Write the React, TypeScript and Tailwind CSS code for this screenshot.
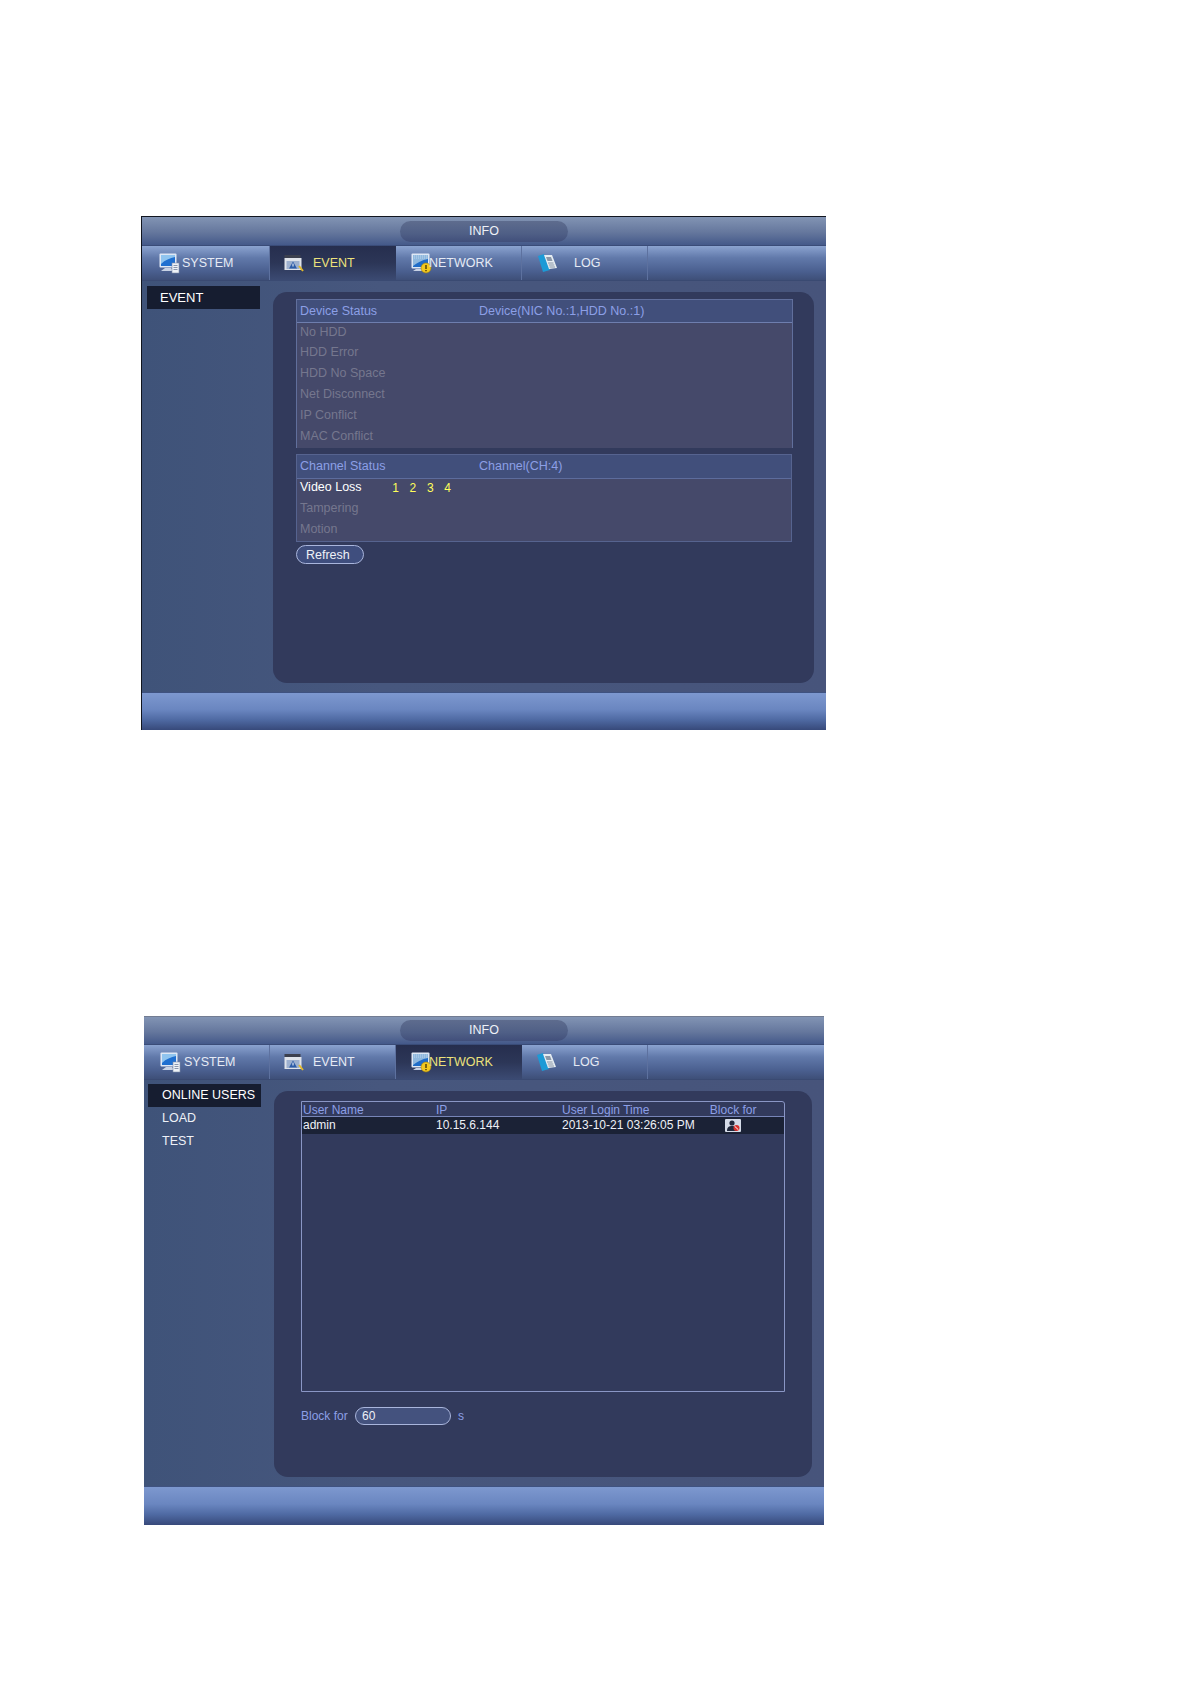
import React from "react";

const SystemIcon = () => (
  <svg width="21" height="21" viewBox="0 0 21 21" className="shrink-0">
    <rect x="0.5" y="0.5" width="17" height="14" rx="1" fill="#dfe8f5" />
    <path d="M2 2h14v11H2z" fill="#1f6fd0" />
    <path d="M2 2h14v2C11 5 6 7 2 11z" fill="#8fc4ef" />
    <path d="M6 15h6l3 3H2z" fill="#c8d2e4" />
    <rect x="13" y="10" width="7" height="10" fill="#eef2f7" stroke="#7f8ca8" strokeWidth="0.6" />
    <path d="M14.5 12.5h4M14.5 14.5h4M14.5 16.5h4" stroke="#6f7d99" strokeWidth="0.8" />
  </svg>
);

const EventIcon = () => (
  <svg width="20" height="18" viewBox="0 0 20 18" className="shrink-0">
    <rect x="0.5" y="1" width="16" height="3" fill="#3c404e" />
    <rect x="0.5" y="4" width="17" height="12" fill="#dfe3ea" />
    <rect x="2.5" y="7" width="13" height="8" fill="#9db0cf" />
    <path d="M9 7.5l4 7H5z" fill="#2d5ca8" />
    <path d="M9 9.5v3" stroke="#ffffff" strokeWidth="1" />
    <path d="M15 12l4 5" stroke="#e2b92a" strokeWidth="2" />
  </svg>
);

const NetworkIcon = () => (
  <svg width="21" height="21" viewBox="0 0 21 21" className="shrink-0">
    <rect x="0.5" y="0.5" width="18" height="15" rx="1" fill="#dfe8f5" />
    <path d="M2 2h15v12H2z" fill="#1f6cc8" />
    <path d="M2 2h15v4C11 7 6 10 2 13z" fill="#8fb8de" />
    <path d="M3 3h13M3 5h13" stroke="#dbe9f6" strokeWidth="0.6" strokeDasharray="1 1" />
    <path d="M5 16h7l2 2H2z" fill="#c8d2e4" />
    <circle cx="15" cy="15" r="5" fill="#f2c81e" stroke="#9d7f10" strokeWidth="0.6" />
    <path d="M15 12v4M15 17v1.3" stroke="#3a2e05" strokeWidth="1.3" />
  </svg>
);

const LogIcon = () => (
  <svg width="20" height="18" viewBox="0 0 20 18" className="shrink-0">
    <path d="M0 2l6-2 6 16-7 2z" fill="#1c9ad6" />
    <path d="M6 1h8l5 13-8 1z" fill="#e6edf2" />
    <path d="M8 3h5l1.5 4h-5z" fill="#8b98a8" />
    <path d="M10 9h5.5M10.8 11h5.5M11.5 13h5.5" stroke="#7d8a9c" strokeWidth="0.9" />
  </svg>
);

const BlockIcon = () => (
  <svg width="16" height="13" viewBox="0 0 16 13">
    <rect width="16" height="13" rx="1" fill="#d5dbe8" />
    <circle cx="7" cy="4" r="2.6" fill="#20283c" />
    <path d="M2 12c0-4 2-5 5-5s5 1 5 5z" fill="#20283c" />
    <circle cx="11.5" cy="9" r="3" fill="#d8302c" />
    <path d="M9.6 7.2l3.8 3.6" stroke="#ffffff" strokeWidth="1" />
  </svg>
);

function Tab({ active, cls, children }: { active?: boolean; cls: string; children: React.ReactNode }) {
  return (
    <div
      className={`h-full flex items-center shrink-0 ${cls} ${
        active
          ? "bg-[linear-gradient(#262e4e,#2c3657_50%,#3b4a72)] text-[#ece27c]"
          : "border-r border-[#5d719f] text-[#e6ebf5]"
      }`}
    >
      {children}
    </div>
  );
}

function Shell({
  wrap,
  titleH,
  active,
  footer,
  tabs,
  body,
}: {
  wrap: string;
  titleH: string;
  active: string;
  footer: string;
  tabs: string[];
  body: React.ReactNode;
}) {
  return (
    <div className={`flex flex-col ${wrap}`}>
      <div className={`${titleH} shrink-0 flex items-center justify-center bg-[linear-gradient(#8294b4,#65779d_55%,#44598a)] border-b border-[#3a4c78]`}>
        <div className="w-[168px] h-[21px] rounded-full bg-[linear-gradient(#5e6c8e,#4f5f86_60%,#414f7b)] flex items-center justify-center text-[#eef1f7]">
          INFO
        </div>
      </div>
      <div className="h-[35px] shrink-0 flex border-b border-[#3a4a72] bg-[linear-gradient(#8ba3d0,#6179aa_35%,#4a5f8f_75%,#3e4f78)]">
        <Tab cls={tabs[0]} active={active === "SYSTEM"}>
          <SystemIcon />
          <span>SYSTEM</span>
        </Tab>
        <Tab cls={tabs[1]} active={active === "EVENT"}>
          <EventIcon />
          <span>EVENT</span>
        </Tab>
        <Tab cls={tabs[2]} active={active === "NETWORK"}>
          <NetworkIcon />
          <span className="-ml-[3px]">NETWORK</span>
        </Tab>
        <Tab cls={tabs[3]}>
          <LogIcon />
          <span>LOG</span>
        </Tab>
      </div>
      <div className="flex-1 min-h-0 flex bg-[linear-gradient(90deg,#3f5379,#47577e_35%,#47547b)]">{body}</div>
      <div className={`${footer} shrink-0 bg-[linear-gradient(#7d98cf,#6a86c0_45%,#4f6aa3_72%,#37497a)] border-t border-[#3f5280]`} />
    </div>
  );
}

const Row = ({ children, on }: { children: React.ReactNode; on?: boolean }) => (
  <div className={`h-[20.8px] flex items-center pl-[3px] pb-[3px] ${on ? "text-white" : "text-[#75778e]"}`}>{children}</div>
);

const Num = ({ children }: { children: React.ReactNode }) => (
  <span className="w-[17.3px] text-center text-[12px] text-[#ffff5a]">{children}</span>
);

function EventBody() {
  return (
    <>
      <div className="w-[131px] shrink-0 pl-[5px] pt-[5px]">
        <div className="w-[113px] h-[23px] bg-[#161d30] text-white text-[13px] flex items-center pl-[13px]">EVENT</div>
      </div>
      <div className="flex-1 mt-[11px] mb-[9px] mr-[12px] rounded-[14px] bg-[#323a5c] pt-[7px] pl-[23px] pr-[21px]">
        <div className="border border-[#616f9c] border-b-0 bg-[#45496a]">
          <div className="h-[23px] flex items-center pl-[3px] bg-[#414f7b] border-b border-[#6e7eae] text-[#8c9fe6]">
            <span className="w-[179px]">Device Status</span>
            <span>Device(NIC No.:1,HDD No.:1)</span>
          </div>
          <Row>No HDD</Row>
          <Row>HDD Error</Row>
          <Row>HDD No Space</Row>
          <Row>Net Disconnect</Row>
          <Row>IP Conflict</Row>
          <Row>MAC Conflict</Row>
        </div>
        <div className="mt-[6px] mr-[1px] border border-[#56638f] bg-[#45496a]">
          <div className="h-[24px] flex items-center pl-[3px] bg-[#414f7b] border-b border-[#5d6c9c] text-[#8c9fe6]">
            <span className="w-[179px]">Channel Status</span>
            <span>Channel(CH:4)</span>
          </div>
          <Row on>
            <span className="w-[87px]">Video Loss</span>
            <Num>1</Num>
            <Num>2</Num>
            <Num>3</Num>
            <Num>4</Num>
          </Row>
          <Row>Tampering</Row>
          <Row>Motion</Row>
        </div>
        <div className="mt-[3px] w-[68px] h-[19px] rounded-full border border-[#a9b5dc] bg-[#3f4e7e] text-[#eef1f7] flex items-center pl-[9px] pt-[1px]">
          Refresh
        </div>
      </div>
    </>
  );
}

function NetworkBody() {
  return (
    <>
      <div className="w-[130px] shrink-0 pl-[4px] pt-[4px] text-[#eef1f7]">
        <div className="w-[113px] h-[23px] bg-[#161d30] text-white flex items-center pl-[14px]">ONLINE USERS</div>
        <div className="h-[23px] flex items-center pl-[14px]">LOAD</div>
        <div className="h-[23px] flex items-center pl-[14px]">TEST</div>
      </div>
      <div className="flex-1 mt-[11px] mb-[9px] mr-[12px] rounded-[14px] bg-[#323a5c] pt-[10px] pl-[27px] pr-[27px]">
        <div className="h-[291px] border border-[#8a96c5] rounded-tr-[3px]">
          <div className="h-[15px] flex items-center pl-[1px] pt-[1px] border-b border-[#7785b8] text-[#8c9fe6] text-[12px]">
            <span className="w-[133px]">User Name</span>
            <span className="w-[126px]">IP</span>
            <span className="w-[147.8px]">User Login Time</span>
            <span>Block for</span>
          </div>
          <div className="h-[17px] flex items-center pl-[1px] pb-[1px] bg-[#1b2236] text-[#eef1f7] text-[12px]">
            <span className="w-[133px]">admin</span>
            <span className="w-[126px]">10.15.6.144</span>
            <span className="w-[147.8px]">2013-10-21 03:26:05 PM</span>
            <span className="ml-[15px] flex"><BlockIcon /></span>
          </div>
        </div>
        <div className="mt-[15px] flex items-center text-[12px] text-[#8c9fe6]">
          <span className="w-[54px]">Block for</span>
          <div className="w-[96px] h-[18px] rounded-full border border-[#a9b5dc] bg-[#44527e] text-[#eef1f7] flex items-center pl-[6px]">60</div>
          <span className="ml-[7px]">s</span>
        </div>
      </div>
    </>
  );
}

export default function App() {
  return (
    <div className="w-[1190px] h-[1684px] bg-white pt-[216px] text-[12.5px] font-['Liberation_Sans',Arial,sans-serif]">
      <Shell
        wrap="ml-[141px] w-[685px] h-[514px] border-t border-l border-[#11151f]"
        titleH="h-[29px]"
        active="EVENT"
        footer="h-[38px]"
        tabs={[
          "w-[128px] pl-[17px] gap-[2px]",
          "w-[126px] pl-[14px] gap-[9px]",
          "w-[126px] pl-[15px]",
          "w-[126px] pl-[16px] gap-[16px]",
        ]}
        body={<EventBody />}
      />
      <Shell
        wrap="mt-[286px] ml-[144px] w-[680px] h-[509px] border-t border-[#727c92]"
        titleH="h-[28px]"
        active="NETWORK"
        footer="h-[39px]"
        tabs={[
          "w-[126px] pl-[16px] gap-[3px]",
          "w-[126px] pl-[14px] gap-[9px]",
          "w-[126px] pl-[15px]",
          "w-[126px] pl-[15px] gap-[16px]",
        ]}
        body={<NetworkBody />}
      />
    </div>
  );
}
